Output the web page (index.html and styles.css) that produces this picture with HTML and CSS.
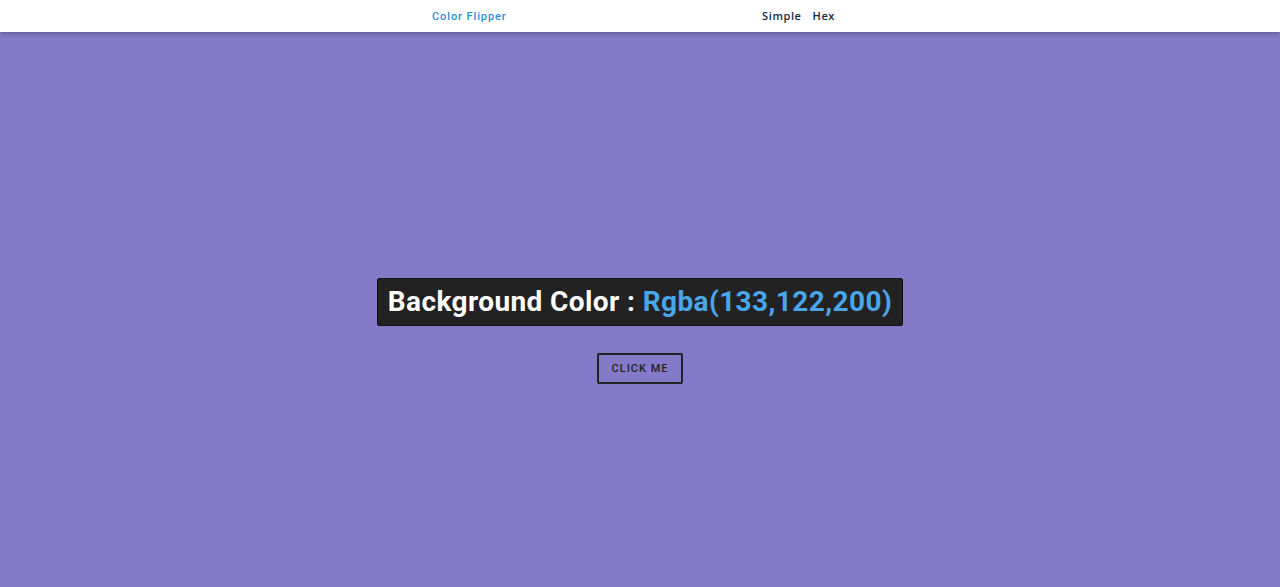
FILE: index.html
```html
<!DOCTYPE html>
<html lang="en">
<head>
    <meta charset="UTF-8">
    <meta name="viewport" content="width=device-width, initial-scale=1.0">
    <title>Color Flipper</title>
    <link rel="stylesheet" href="styles.css">
</head>
<body>
    <nav class="nav">
        <div class="nav-center">
            <h4 class="logo">Color Flipper</h4>
            <ul class="nav-links">
                <li><a href="#">Simple</a></li>
                <li><a href="#">Hex</a></li>
            </ul>
        </div>
    </nav>
    <main class="main">
        <div class="container">
            <h2 class="title">Background Color : <span class="color">Rgba(133,122,200)</span></h2>
            <button class="btn" type="button">Click Me</button>
        </div>
    </main>
</body>
</html>
```

FILE: styles.css
```css
* {
    box-sizing: border-box;
    margin: 0;
    padding: 0;
}
body {
    font-family: Roboto, 'Open Sans', sans-serif;
    background-color: rgb(133, 122, 200);
    color: #102a42;
    height: 587px;
    overflow: hidden;
}
.nav {
    background-color: #fff;
    height: 32px;
    box-shadow: 0 2px 5px rgba(0, 0, 0, 0.25);
    position: relative;
    z-index: 1;
}
.nav-center {
    width: 416px;
    height: 100%;
    margin: 0 auto;
    display: flex;
    align-items: center;
    justify-content: space-between;
}
.logo {
    color: #2e8fd8;
    font-size: 11px;
    font-weight: 500;
    letter-spacing: 0.9px;
}
.nav-links {
    list-style: none;
    display: flex;
    gap: 11px;
    padding-right: 13px;
    padding-bottom: 3px;
}
.nav-links a {
    text-decoration: none;
    color: #102a42;
    font-family: 'Open Sans', sans-serif;
    font-size: 11px;
    font-weight: 600;
    letter-spacing: 0.6px;
}
.main {
    display: flex;
    justify-content: center;
    padding-top: 246px;
}
.container {
    display: flex;
    flex-direction: column;
    align-items: center;
}
.title {
    background-color: #222;
    color: #fff;
    font-size: 28px;
    font-weight: 700;
    letter-spacing: 0.4px;
    padding: 5px 10px;
    border-radius: 2px;
    line-height: 36px;
    border: 1px solid #111;
}
.color {
    color: #49a6e9;
}
.btn {
    margin-top: 27px;
    background: transparent;
    border: 2px solid #222;
    border-radius: 2px;
    padding: 0 13px;
    height: 31px;
    font-family: Roboto, sans-serif;
    font-size: 11px;
    font-weight: 500;
    letter-spacing: 1px;
    text-transform: uppercase;
    color: #222;
    cursor: pointer;
}
```
